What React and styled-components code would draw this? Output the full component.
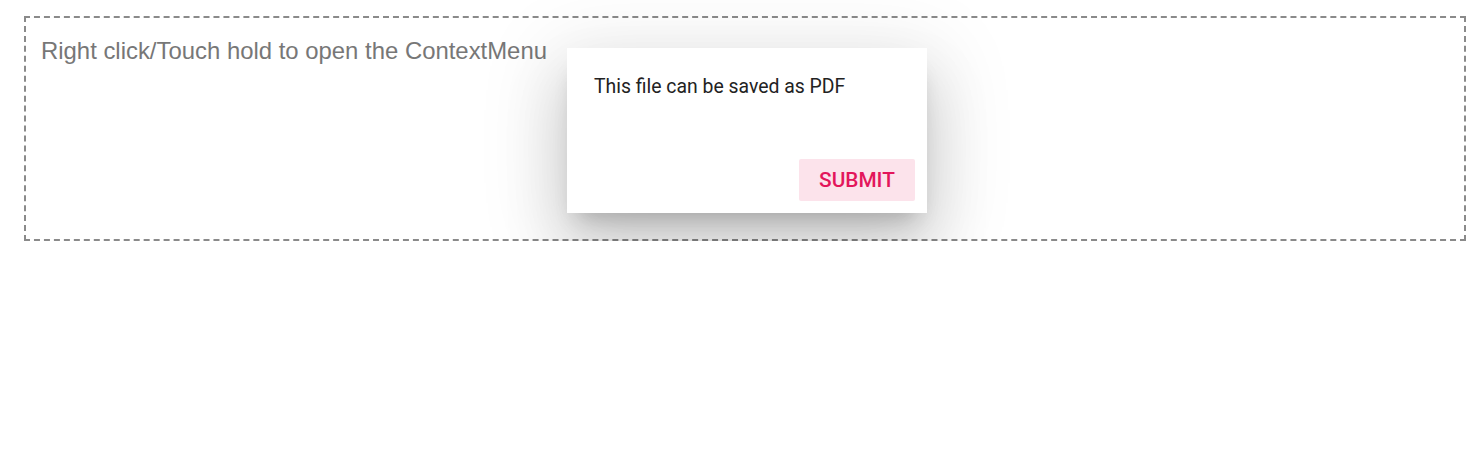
import React from "react";
import styled, { createGlobalStyle } from "styled-components";

const Global = createGlobalStyle`
  html, body { margin: 0; padding: 0; background: #fff; }
  body { padding: 16px 17px 0 24px; }
`;

const Stage = styled.div`
  position: relative;
`;

const Target = styled.div`
  box-sizing: border-box;
  height: 225px;
  border: 2px dashed #8a8a8a;
  padding: 20px 15px;
  font-family: Arial, "Liberation Sans", sans-serif;
  font-size: 23.9px;
  color: #777;
  line-height: 26px;
`;

const Dialog = styled.div`
  position: absolute;
  left: 543px;
  top: 32px;
  width: 360px;
  height: 165px;
  box-sizing: border-box;
  background: #fff;
  display: flex;
  flex-direction: column;
  justify-content: space-between;
  padding: 26px 12px 12px 27px;
  box-shadow: 0 15px 21px -10px rgba(0, 0, 0, 0.2),
    0 38px 62px 4px rgba(0, 0, 0, 0.13),
    0 16px 80px 14px rgba(0, 0, 0, 0.1);
`;

const Content = styled.p`
  margin: 0;
  font-family: Roboto, sans-serif;
  font-size: 19.4px;
  line-height: 26px;
  color: #222;
`;

const Footer = styled.div`
  display: flex;
  justify-content: flex-end;
`;

const Button = styled.button`
  font-family: Roboto, sans-serif;
  font-weight: 500;
  font-size: 20.8px;
  color: #e3165b;
  background: #fce3eb;
  border: none;
  border-radius: 2px;
  width: 116px;
  height: 42px;
  padding: 0;
  text-transform: uppercase;
`;

export default function App() {
  return (
    <>
      <Global />
      <Stage>
        <Target>Right click/Touch hold to open the ContextMenu</Target>
        <Dialog>
          <Content>This file can be saved as PDF</Content>
          <Footer>
            <Button>Submit</Button>
          </Footer>
        </Dialog>
      </Stage>
    </>
  );
}
